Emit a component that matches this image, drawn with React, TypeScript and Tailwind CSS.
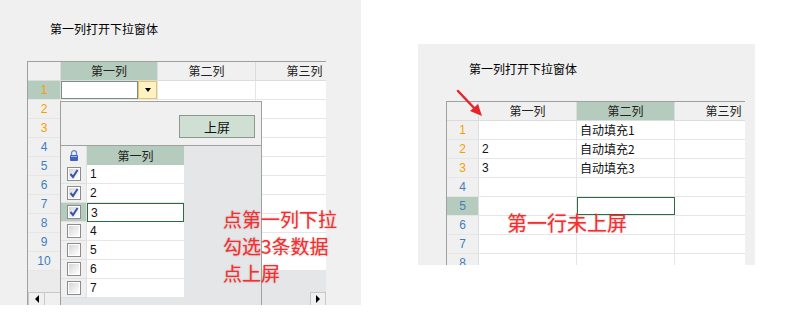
import React from 'react';

const CJK = "font-['Noto_Sans_CJK_SC','Liberation_Sans',sans-serif]";
const NUM = "font-['Liberation_Sans','Noto_Sans_CJK_SC',sans-serif]";
const GREEN = 'bg-[#b5cbbd]';

function CheckBox({ checked }: { checked: boolean }) {
  return (
    <svg width="14" height="14" viewBox="0 0 14 14">
      <defs>
        <linearGradient id="cbg" x1="0" y1="0" x2="1" y2="1">
          <stop offset="0" stopColor="#d6d6d6" />
          <stop offset="1" stopColor="#ffffff" />
        </linearGradient>
      </defs>
      <rect x="0.5" y="0.5" width="13" height="13" fill="#fff" stroke="#8c8c8c" />
      <rect x="2" y="2" width="10" height="10" fill="url(#cbg)" />
      {checked && (
        <path d="M3.5 7 L6 10 L10.5 3" fill="none" stroke="#3557a8" strokeWidth="2" />
      )}
    </svg>
  );
}

function Lock() {
  return (
    <svg width="10" height="11" viewBox="0 0 10 11">
      <path d="M2.5 5 V3.2 A2.5 2.5 0 0 1 7.5 3.2 V5" fill="none" stroke="#6b86c9" strokeWidth="1.3" />
      <rect x="1" y="5" width="8" height="6" rx="1" fill="#3f63c0" />
      <rect x="2" y="6" width="6" height="1" fill="#9fb4e6" />
    </svg>
  );
}

function RowHead({ n, active, w }: { n: number; active?: boolean; w: string }) {
  return (
    <div
      className={`${w} h-full shrink-0 flex items-center justify-center border-r border-[#dedede] text-[12px] ${NUM} ${
        active ? GREEN : 'bg-[#f0f0f0]'
      } ${n <= 3 ? 'text-[#f5a000]' : 'text-[#3f7fbf]'}`}
    >
      {n}
    </div>
  );
}

function HeaderCell({ label, active, w }: { label: string; active?: boolean; w: string }) {
  return (
    <div
      className={`${w} h-full shrink-0 flex items-center justify-center border-r border-[#dcdcdc] text-[12px] text-[#222] ${CJK} ${
        active ? GREEN : 'bg-[#f0f0f0]'
      }`}
    >
      {label}
    </div>
  );
}

function LeftPanel() {
  const rows = [1, 2, 3, 4, 5, 6, 7, 8, 9, 10];
  return (
    <div className="relative w-[361px] h-[305px] shrink-0 bg-[#f0f0f0] overflow-hidden">
      <div className={`h-[61px] pl-[50px] pt-[21px] leading-[16px] text-[12px] text-black ${CJK}`}>
        第一列打开下拉窗体
      </div>
      <div className="ml-[27px] w-[299px] border-l border-t border-[#a0a0a0] overflow-hidden">
        <div className="flex h-[19px] border-b border-[#dcdcdc]">
          <div className="w-[33px] h-full shrink-0 bg-[#f0f0f0] border-r border-[#dcdcdc]" />
          <HeaderCell label="第一列" active w="w-[97px]" />
          <HeaderCell label="第二列" w="w-[98px]" />
          <HeaderCell label="第三列" w="w-[98px]" />
        </div>
        {rows.map(n => (
          <div key={n} className="flex h-[19px] border-b border-[#e6e6e6]">
            <RowHead n={n} active={n === 1} w="w-[33px]" />
            {n === 1 ? (
              <div className="w-[97px] h-full shrink-0 flex border-r border-[#e6e6e6]">
                <div className="flex-1 bg-white border border-[#7d8d83]" />
                <div className="w-[19px] h-full bg-[#fff3c2] border border-[#e6c36a] flex items-center justify-center">
                  <div className="w-0 h-0 border-l-[3px] border-r-[3px] border-t-[4px] border-l-transparent border-r-transparent border-t-black" />
                </div>
              </div>
            ) : (
              <div className="w-[97px] h-full shrink-0 bg-white border-r border-[#e6e6e6]" />
            )}
            <div className="w-[98px] h-full shrink-0 bg-white border-r border-[#e6e6e6]" />
            <div className="w-[98px] h-full shrink-0 bg-white" />
          </div>
        ))}
        <div className="flex h-[21px]">
          <div className="w-[33px] shrink-0 bg-[#ebebeb] border-r border-[#dcdcdc]" />
          <div className="flex-1 bg-[#e5e6e8]" />
        </div>
        <div className="flex h-[14px] bg-[#e5e6e8]">
          <div className="w-[17px] shrink-0 bg-[#f0f0f0] border border-[#c8c8c8] flex items-center justify-center">
            <div className="w-0 h-0 border-t-[4px] border-b-[4px] border-r-[4px] border-t-transparent border-b-transparent border-r-black" />
          </div>
          <div className="w-[16px] shrink-0 bg-[#f0f0f0] border-t border-r border-[#c8c8c8]" />
          <div className="flex-1" />
          <div className="w-[16px] shrink-0 bg-[#f0f0f0] border border-[#c8c8c8] flex items-center justify-center">
            <div className="w-0 h-0 border-t-[4px] border-b-[4px] border-l-[4px] border-t-transparent border-b-transparent border-l-black" />
          </div>
        </div>
      </div>

      {/* dropdown popup */}
      <div className="absolute left-[60px] top-[101px] w-[202px] h-[220px] border border-[#a0a0a0] bg-[#f0f0f0]">
        <div className="h-[43px] flex justify-end pr-[6px] pt-[13px]">
          <div className={`w-[76px] h-[23px] bg-[#cfdfd3] border border-[#8a9a8e] flex items-center justify-center text-[13px] text-[#111] ${CJK}`}>
            上屏
          </div>
        </div>
        <div className="border-t border-[#a0a0a0] bg-[#e5e6e8] h-full">
          <div className="flex h-[19px]">
            <div className="w-[26px] shrink-0 bg-[#f0f0f0] border-r border-[#e0e0e0] flex items-center justify-center">
              <Lock />
            </div>
            <div className={`w-[97px] shrink-0 ${GREEN} flex items-center justify-center text-[12px] text-[#222] ${CJK}`}>
              第一列
            </div>
          </div>
          {[1, 2, 3, 4, 5, 6, 7].map(n => (
            <div key={n} className="flex h-[19px]">
              <div
                className={`w-[26px] shrink-0 flex items-center justify-center border-b border-r border-[#e0e0e0] ${
                  n === 3 ? GREEN : 'bg-[#f0f0f0]'
                }`}
              >
                <CheckBox checked={n <= 3} />
              </div>
              <div
                className={`w-[97px] shrink-0 bg-white flex items-center pl-[3px] text-[12px] text-[#111] ${NUM} ${
                  n === 3 ? 'border border-[#2a6b46]' : 'border-b border-[#e6e6e6]'
                }`}
              >
                {n}
              </div>
            </div>
          ))}
        </div>
      </div>

      <div
        className={`absolute left-[223px] top-[205px] text-[19px] leading-[27px] text-[#ff2a2a] ${CJK} [text-shadow:0_0_2px_rgba(0,0,0,0.3)]`}
      >
        <div>点第一列下拉</div>
        <div>勾选3条数据</div>
        <div>点上屏</div>
      </div>
    </div>
  );
}

function RightPanel() {
  const data: Record<number, [string, string]> = {
    1: ['', '自动填充1'],
    2: ['2', '自动填充2'],
    3: ['3', '自动填充3'],
  };
  return (
    <div className="relative ml-[57px] mt-[44px] w-[337px] h-[221px] shrink-0 bg-[#f0f0f0] overflow-hidden">
      <div className={`h-[57px] pl-[51px] pt-[17px] leading-[16px] text-[12px] text-black ${CJK}`}>
        第一列打开下拉窗体
      </div>
      <div className="ml-[28px] w-[299px] border-l border-t border-[#a0a0a0] overflow-hidden">
        <div className="flex h-[19px] border-b border-[#dcdcdc]">
          <div className="w-[32px] h-full shrink-0 bg-[#f0f0f0] border-r border-[#dcdcdc]" />
          <HeaderCell label="第一列" w="w-[98px]" />
          <HeaderCell label="第二列" active w="w-[98px]" />
          <HeaderCell label="第三列" w="w-[98px]" />
        </div>
        {[1, 2, 3, 4, 5, 6, 7, 8].map(n => {
          const d = data[n] || ['', ''];
          return (
            <div key={n} className="flex h-[19px] border-b border-[#e6e6e6]">
              <RowHead n={n} active={n === 5} w="w-[32px]" />
              <div className={`w-[98px] h-full shrink-0 bg-white border-r border-[#e6e6e6] flex items-center pl-[3px] text-[12px] text-[#111] ${NUM}`}>
                {d[0]}
              </div>
              <div
                className={`w-[98px] h-full shrink-0 bg-white flex items-center pl-[3px] text-[12px] text-[#111] ${CJK} ${
                  n === 5 ? 'shadow-[inset_0_0_0_1px_#2a6b46]' : 'border-r border-[#e6e6e6]'
                }`}
              >
                {d[1]}
              </div>
              <div className="w-[98px] h-full shrink-0 bg-white" />
            </div>
          );
        })}
      </div>

      <svg className="absolute left-0 top-0" width="80" height="80" viewBox="0 0 80 80">
        <line x1="40" y1="47" x2="58" y2="66" stroke="#e8232b" strokeWidth="2.5" strokeLinecap="round" />
        <polygon points="64,72 52,67 60,60" fill="#e8232b" />
      </svg>

      <div
        className={`absolute left-[89px] top-[166px] text-[20px] leading-[26px] text-[#ff2a2a] ${CJK} [text-shadow:0_0_2px_rgba(0,0,0,0.3)]`}
      >
        第一行未上屏
      </div>
    </div>
  );
}

export default function App() {
  return (
    <div className="w-[786px] h-[332px] bg-white flex items-start overflow-hidden">
      <LeftPanel />
      <RightPanel />
    </div>
  );
}
